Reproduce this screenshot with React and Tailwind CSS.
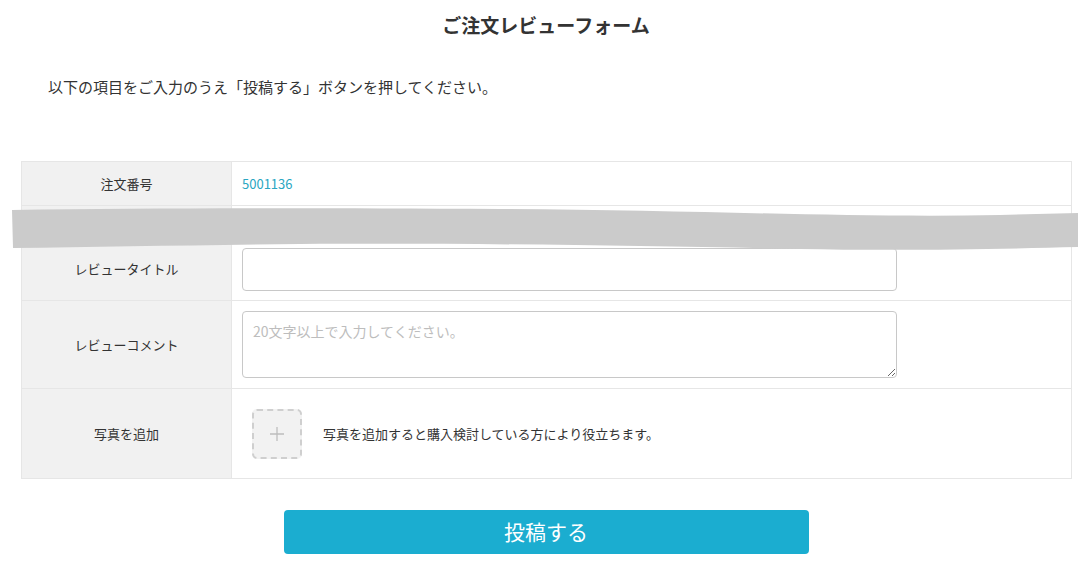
import React from "react";

function Redaction() {
  return (
    <svg
      className="pointer-events-none absolute left-0 top-0"
      width="1080"
      height="565"
      viewBox="0 0 1080 565"
    >
      <path
        d="M12 210 C 150 208, 300 208, 500 209 C 700 210, 850 218, 1000 215 L 1078 213 L 1078 247 C 1000 249, 900 251, 800 249 C 650 246, 500 243, 300 244 C 200 245, 100 247, 13 248 Z"
        fill="#cbcbcb"
      />
    </svg>
  );
}

function Row(props) {
  return (
    <div className="flex border-t border-[#e6e6e6] first:border-t-0" style={{ minHeight: props.height }}>
      <div className="flex w-[210px] shrink-0 items-center justify-center border-r border-[#e6e6e6] bg-[#f1f1f1] text-[13px] text-[#333]">
        {props.label}
      </div>
      <div className="flex flex-1 items-center px-[10px]">{props.children}</div>
    </div>
  );
}

export default function App() {
  return (
    <div
      className="relative h-[565px] w-[1080px] overflow-hidden bg-white text-[#333]"
      style={{ fontFamily: '"Noto Sans CJK JP", "Noto Sans", sans-serif' }}
    >
      <h1 className="pt-[9px] text-center text-[19px] font-bold leading-[32px]">
        <span className="ml-[12px]">ご注文レビューフォーム</span>
      </h1>
      <p className="mt-[35px] pl-[48px] text-[15px] leading-[22px]">
        以下の項目をご入力のうえ「投稿する」ボタンを押してください。
      </p>

      <div className="ml-[21px] mt-[63px] w-[1051px] border border-[#e6e6e6]">
        <Row label="注文番号" height={43}>
          <span className="text-[13px] text-[#2aa6c2]">5001136</span>
        </Row>
        <Row label="" height={32}>
          <span className="text-[13px]"></span>
        </Row>
        <Row label="レビュータイトル" height={63}>
          <input
            type="text"
            className="h-[43px] w-[655px] rounded-[4px] border border-[#c8c8c8] bg-white px-[10px] text-[14px] outline-none"
          />
        </Row>
        <Row label="レビューコメント" height={88}>
          <textarea
            placeholder="20文字以上で入力してください。"
            className="h-[67px] w-[655px] rounded-[4px] border border-[#c8c8c8] bg-white px-[10px] py-[9px] text-[14px] leading-[20px] outline-none placeholder:text-[#bdbdbd]"
          />
        </Row>
        <Row label="写真を追加" height={90}>
          <div className="ml-[10px] flex h-[50px] w-[50px] items-center justify-center rounded-[5px] border-2 border-dashed border-[#cfcfcf] bg-[#f2f2f2]">
            <svg width="14" height="14" viewBox="0 0 14 14">
              <path d="M7 0 V14 M0 7 H14" stroke="#bdbdbd" strokeWidth="1.3" />
            </svg>
          </div>
          <span className="ml-[21px] text-[13px]">
            写真を追加すると購入検討している方により役立ちます。
          </span>
        </Row>
      </div>

      <div className="mt-[31px] flex justify-center pl-[12px]">
        <button className="h-[44px] w-[525px] rounded-[4px] bg-[#1badd0] text-[21px] text-white">
          投稿する
        </button>
      </div>

      <Redaction />
    </div>
  );
}
